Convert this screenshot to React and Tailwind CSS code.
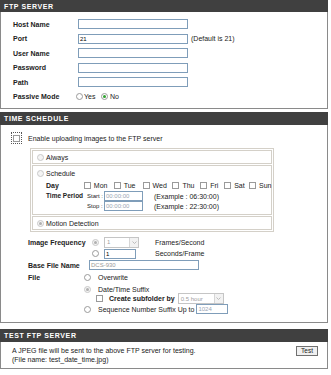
import React from "react";

const Radio = ({ checked, disabled, className = "" }) => (
  <span
    className={
      "inline-flex items-center justify-center w-[7px] h-[7px] rounded-full border shrink-0 " +
      (disabled ? "border-[#c9c9c9] bg-[#f4f4f4] " : "border-[#9a9a9a] bg-white ") +
      className
    }
  >
    {checked && (
      <span
        className={
          "w-[3px] h-[3px] rounded-full " + (disabled ? "bg-[#b0b0b0]" : "bg-[#2fa12f]")
        }
      />
    )}
  </span>
);

const Check = ({ className = "" }) => (
  <span className={"inline-block w-[7px] h-[7px] border border-[#9a9a9a] bg-white shrink-0 " + className} />
);

const Input = ({ w, value, muted, className = "" }) => (
  <div
    className={
      "h-[10px] border border-[#7f9db9] bg-white flex items-center px-[1px] text-[6px] leading-none shrink-0 " +
      (muted ? "text-[#9aa6b4] " : "text-black ") +
      className
    }
    style={{ width: w }}
  >
    {value}
  </div>
);

const Select = ({ w, value }) => (
  <div
    className="h-[11px] border border-[#c5c5c5] bg-white flex items-center justify-between text-[6px] leading-none text-[#a0a0a0] shrink-0"
    style={{ width: w }}
  >
    <span className="pl-[2px]">{value}</span>
    <span className="h-full w-[9px] border-l border-[#d6d6d6] bg-[#f2f2f2] flex items-center justify-center">
      <svg width="5" height="3" viewBox="0 0 5 3">
        <path d="M0.5 0.5 L2.5 2.5 L4.5 0.5" stroke="#b5b5b5" strokeWidth="0.9" fill="none" />
      </svg>
    </span>
  </div>
);

const Header = ({ title, h }) => (
  <div
    className={
      "bg-[#404040] text-white font-bold text-[7px] tracking-[0.6px] flex items-center pl-[4px] " + h
    }
  >
    {title}
  </div>
);

export default function App() {
  return (
    <div
      className="w-[331px] h-[375px] bg-white text-[7px] leading-none text-[#222] whitespace-nowrap"
      style={{ fontFamily: '"Liberation Sans", Arial, sans-serif' }}
    >
      <div className="w-[328px]">
        {/* FTP SERVER */}
        <Header title="FTP SERVER" h="h-[12px]" />
        <div className="border border-t-0 border-[#8a8a8a] pt-[5px] pb-[4px]">
          {[
            ["Host Name", ""],
            ["Port", "21"],
            ["User Name", ""],
            ["Password", ""],
            ["Path", ""],
          ].map(([label, v]) => (
            <div key={label} className="h-[14.5px] flex items-center">
              <span className="w-[77px] pl-[12px] font-bold">{label}</span>
              <Input w="110px" value={v} />
              {label === "Port" && <span className="ml-[3px]">(Default is 21)</span>}
            </div>
          ))}
          <div className="h-[14.5px] flex items-center">
            <span className="w-[75px] pl-[12px] font-bold">Passive Mode</span>
            <Radio />
            <span className="ml-[1px] w-[17px]">Yes</span>
            <Radio checked />
            <span className="ml-[2px]">No</span>
          </div>
        </div>

        {/* TIME SCHEDULE */}
        <div className="mt-[3px]">
          <Header title="TIME SCHEDULE" h="h-[13px]" />
          <div className="border border-t-0 border-[#8a8a8a] pt-[7px] pb-[8px]">
            <div className="h-[12px] flex items-center">
              <span className="ml-[10px] w-[11px] h-[12px] border border-dotted border-[#555] flex items-center justify-center">
                <Check />
              </span>
              <span className="ml-[6px]">Enable uploading images to the FTP server</span>
            </div>

            <div className="mt-[4px] ml-[29px] w-[244px] border border-[#d4d0c8] p-px flex flex-col gap-px">
              <div className="h-[14px] border border-[#d4d0c8] flex items-center pl-[4px]">
                <Radio disabled />
                <span className="ml-[2px]">Always</span>
              </div>
              <div className="border border-[#d4d0c8] pb-[3px]">
                <div className="h-[14px] flex items-center pl-[4px]">
                  <Radio disabled />
                  <span className="ml-[2px]">Schedule</span>
                </div>
                <div className="h-[11px] flex items-center">
                  <span className="w-[51px] pl-[13px] font-bold">Day</span>
                  {[
                    ["Mon", "w-[30px]"],
                    ["Tue", "w-[29px]"],
                    ["Wed", "w-[30px]"],
                    ["Thu", "w-[28px]"],
                    ["Fri", "w-[24px]"],
                    ["Sat", "w-[25px]"],
                    ["Sun", "w-[22px]"],
                  ].map(([d, w]) => (
                    <span key={d} className={"flex items-center " + w}>
                      <Check />
                      <span className="ml-[3px]">{d}</span>
                    </span>
                  ))}
                </div>
                <div className="h-[10px] flex items-center">
                  <span className="w-[54px] pl-[13px] font-bold text-[6.5px]">Time Period</span>
                  <span className="w-[17px] text-[6px]">Start :</span>
                  <Input w="39px" value="00:00:00" muted className="bg-[#fafafa]" />
                  <span className="ml-[11px]">(Example : 06:30:00)</span>
                </div>
                <div className="h-[10px] flex items-center">
                  <span className="w-[54px]" />
                  <span className="w-[17px] text-[6px]">Stop :</span>
                  <Input w="39px" value="00:00:00" muted className="bg-[#fafafa]" />
                  <span className="ml-[11px]">(Example : 22:30:00)</span>
                </div>
              </div>
              <div className="h-[14px] border border-[#d4d0c8] flex items-center pl-[4px]">
                <Radio checked disabled />
                <span className="ml-[2px]">Motion Detection</span>
              </div>
            </div>

            <div className="mt-[4px] h-[12px] flex items-center">
              <span className="w-[91px] pl-[27px] font-bold">Image Frequency</span>
              <Radio checked disabled />
              <span className="w-[5px]" />
              <Select w="35px" value="1" />
              <span className="ml-[16px]">Frames/Second</span>
            </div>
            <div className="h-[11px] flex items-center">
              <span className="w-[91px]" />
              <Radio />
              <span className="w-[5px]" />
              <Input w="32px" value="1" className="text-[#444]" />
              <span className="ml-[19px]">Seconds/Frame</span>
            </div>
            <div className="mt-[1px] h-[10px] flex items-center">
              <span className="w-[88px] pl-[27px] font-bold">Base File Name</span>
              <Input w="110px" value="DCS-930" muted className="text-[#999]" />
            </div>
            <div className="flex mt-[1px]">
              <span className="w-[83px] pl-[27px] font-bold pt-[3px]">File</span>
              <div className="flex flex-col">
                <div className="h-[12px] flex items-center">
                  <Radio />
                  <span className="ml-[7px]">Overwrite</span>
                </div>
                <div className="mt-[1px] h-[10px] flex items-center">
                  <Radio checked disabled />
                  <span className="ml-[7px]">Date/Time Suffix</span>
                </div>
                <div className="h-[9px] flex items-center pl-[12px]">
                  <Check />
                  <span className="ml-[6px] font-bold">Create subfolder by</span>
                  <span className="ml-[3px]">
                    <Select w="46px" value="0.5 hour" />
                  </span>
                </div>
                <div className="mt-[1px] h-[10px] flex items-center">
                  <Radio />
                  <span className="ml-[7px]">Sequence Number Suffix Up to</span>
                  <Input w="32px" value="1024" muted className="ml-[2px]" />
                </div>
              </div>
            </div>
          </div>
        </div>

        {/* TEST FTP SERVER */}
        <div className="mt-[6px]">
          <Header title="TEST FTP SERVER" h="h-[13px]" />
          <div className="border border-t-0 border-[#8a8a8a] pt-[4px] pb-[4px] pl-[11px] pr-[9px] flex justify-between">
            <div className="flex flex-col">
              <span className="h-[9px] flex items-center">
                A JPEG file will be sent to the above FTP server for testing.
              </span>
              <span className="h-[9px] flex items-center">(File name: test_date_time.jpg)</span>
            </div>
            <div className="w-[22px] h-[10px] border border-[#707070] bg-[#f0f0f0] flex items-center justify-center text-[6.5px]">
              Test
            </div>
          </div>
        </div>
      </div>
    </div>
  );
}
